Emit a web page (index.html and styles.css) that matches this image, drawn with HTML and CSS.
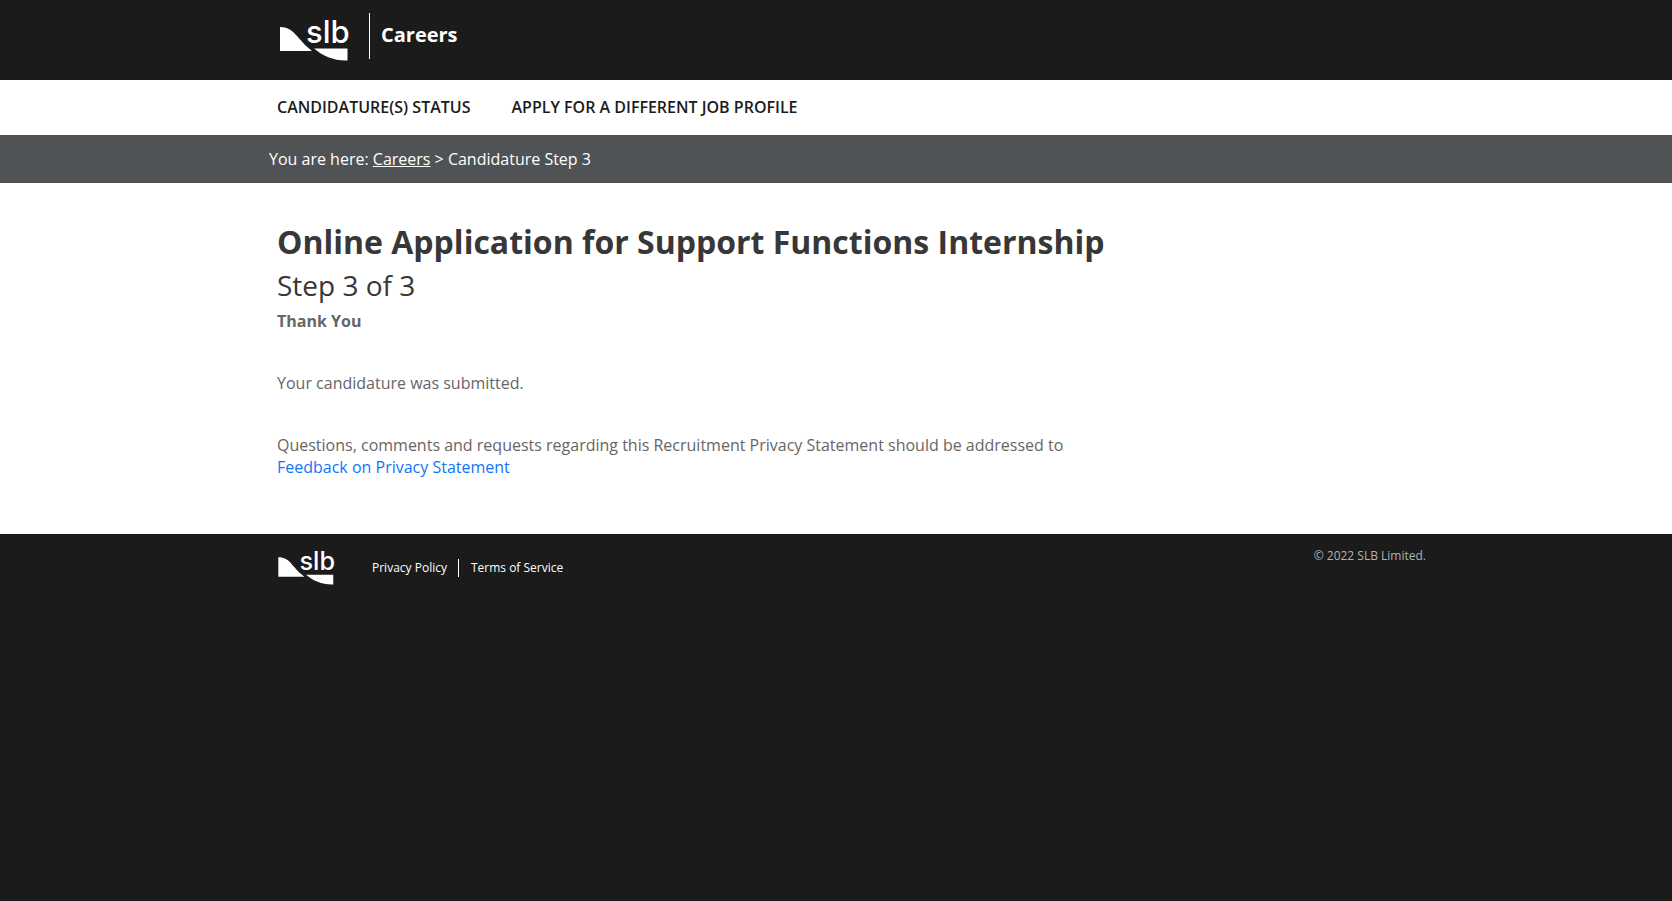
FILE: index.html
```html
<!DOCTYPE html>
<html lang="en">
<head>
<meta charset="utf-8">
<meta name="viewport" content="width=device-width, initial-scale=1">
<title>Careers | Candidature Step 3</title>
<link rel="stylesheet" href="styles.css">
</head>
<body>
<header class="header">
  <div class="container header-row">
    <a class="logo" href="#" aria-label="SLB home">
      <svg class="logo-svg" viewBox="0 0 68 43" aria-hidden="true">
        <path fill="currentColor" d="M0 9C7 9 12 12 17 18L25 27L32 33H0Z"/>
        <path fill="currentColor" d="M34 30.500H67.500V42.500C54 43 43 38 34 30.500Z"/>
        <text class="logo-text" x="26" y="25">slb</text>
      </svg>
    </a>
    <a class="site-name" href="#">Careers</a>
  </div>
</header>
<nav class="nav" aria-label="Main">
  <div class="container nav-row">
    <a href="#">CANDIDATURE(S) STATUS</a>
    <a href="#">APPLY FOR A DIFFERENT JOB PROFILE</a>
  </div>
</nav>
<div class="breadcrumb">
  <div class="container breadcrumb-row">You are here: <a href="#">Careers</a> &gt; Candidature Step 3</div>
</div>
<main class="main">
  <h1>Online Application for Support Functions Internship</h1>
  <h2>Step 3 of 3</h2>
  <h3>Thank You</h3>
  <p>Your candidature was submitted.</p>
  <p>Questions, comments and requests regarding this Recruitment Privacy Statement should be addressed to<br><a href="#">Feedback on Privacy Statement</a></p>
</main>
<footer class="footer">
  <div class="container footer-row">
    <a class="logo logo-small" href="#" aria-label="SLB home">
      <svg class="logo-svg" viewBox="0 0 68 43" aria-hidden="true">
        <path fill="currentColor" d="M0 9C7 9 12 12 17 18L25 27L32 33H0Z"/>
        <path fill="currentColor" d="M34 30.500H67.500V42.500C54 43 43 38 34 30.500Z"/>
        <text class="logo-text" x="26" y="25">slb</text>
      </svg>
    </a>
    <ul class="footer-links">
      <li><a href="#">Privacy Policy</a></li>
      <li><a href="#">Terms of Service</a></li>
    </ul>
    <small class="copyright">© 2022 SLB Limited.</small>
  </div>
</footer>
</body>
</html>
```
FILE: styles.css
```css
* { box-sizing: border-box; }
body {
  margin: 0;
  min-height: 100vh;
  background: #1b1b1b;
  color: #666;
  font-family: "Open Sans", "Noto Sans", sans-serif;
  font-size: 16px;
  line-height: 22px;
}
.container {
  width: 100%;
  max-width: 1180px;
  margin: 0 auto;
  padding: 0 0 0 31px;
}
.header { background: #1b1b1b; color: #fff; }
.header-row { display: flex; align-items: flex-start; padding: 13px 0 21px 34px; }
.logo { display: block; color: #fff; width: 68px; height: 43px; margin-top: 5px; }
.logo-svg { display: block; width: 100%; height: 100%; overflow: visible; }
.logo-text { font-family: Inter, sans-serif; font-size: 31px; font-weight: 500; fill: currentColor; }
.site-name {
  margin-left: 21px;
  padding-left: 11px;
  border-left: 1px solid #fff;
  color: #fff;
  font-size: 20px;
  font-weight: 700;
  line-height: 44px;
  height: 46px;
  text-decoration: none;
}
.header-row { padding-bottom: 19px; }
.nav { background: #fff; }
.nav-row { display: flex; flex-wrap: wrap; gap: 0 41px; }
.nav a { color: #1b1b1b; font-weight: 600; line-height: 55px; text-decoration: none; }
.breadcrumb { background: #4f5355; color: #fff; line-height: 48px; }
.breadcrumb-row { padding-left: 23px; }
.breadcrumb a { color: #fff; text-decoration: underline; }
.main { background: #fff; padding: 37px 0 56px max(31px, calc(50% - 559px)); }
h1, h2, h3 { margin: 0; }
h1 { color: #373737; font-size: 32px; font-weight: 700; line-height: 44px; }
h2 { color: #373737; font-size: 28px; font-weight: 400; line-height: 42px; }
h3 { font-size: 16px; font-weight: 700; line-height: 30px; }
.main p { margin: 0 0 40px; }
h3 + p { padding-top: 36px; }
.main p:last-child { margin: 0; }
.main a { color: #0f75fb; text-decoration: none; }
.footer-row { display: flex; align-items: flex-start; padding-top: 16px; padding-left: 32px; font-size: 12px; }
.logo-small { width: 56px; height: 35px; margin-top: 0; }
.footer-links { display: flex; margin: 9px 0 0 38px; padding: 0; list-style: none; line-height: 18px; }
.footer-links li + li { margin-left: 11px; padding-left: 12px; border-left: 1px solid #fff; }
.footer-links a { color: #fff; text-decoration: none; }
.copyright { margin-left: auto; color: #b1b3b3; font-size: 12px; line-height: 12px; }
```
